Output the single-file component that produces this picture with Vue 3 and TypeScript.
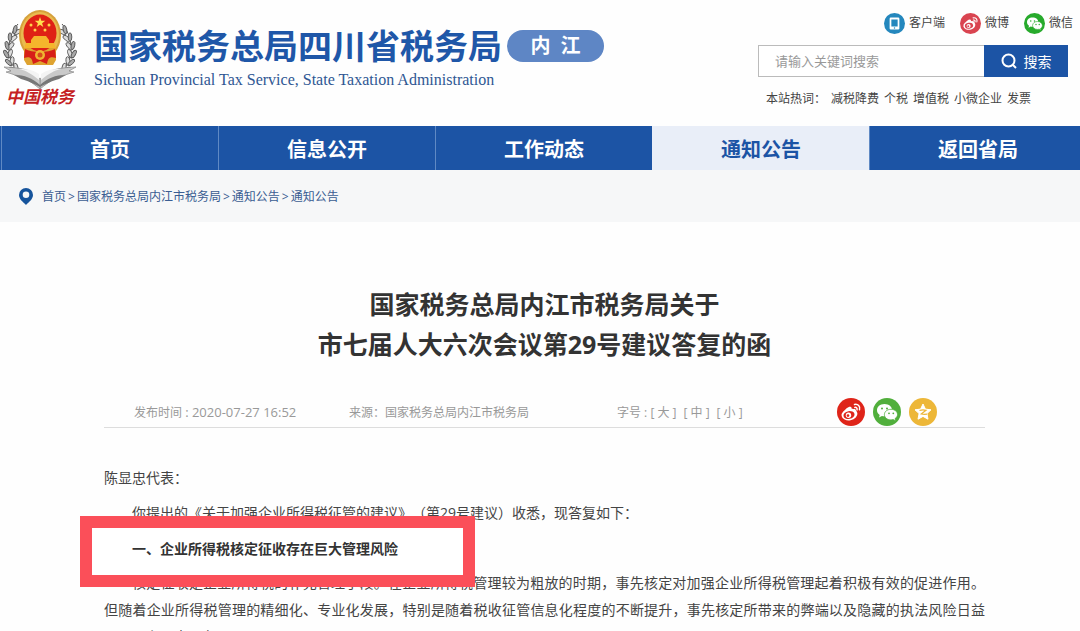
<script setup lang="ts">
import { ref } from 'vue'

const keyword = ref('')
const navItems: string[] = ['首页', '信息公开', '工作动态', '通知公告', '返回省局']
const activeItem = '通知公告'
const hotWords: string[] = ['减税降费', '个税', '增值税', '小微企业', '发票']
const crumbs: string[] = ['首页', '国家税务总局内江市税务局', '通知公告', '通知公告']
const sizes: string[] = ['大', '中', '小']
// Leaf positions of the right-hand wheat ear; the left one is mirrored.
const leaves = [
  { x: 61, y: 20, r: -38 }, { x: 66, y: 27, r: -25 }, { x: 69, y: 35, r: -12 },
  { x: 70, y: 43, r: 5 }, { x: 68, y: 51, r: 22 }, { x: 64, y: 58, r: 40 },
]
</script>

<template>
  <svg class="defs" aria-hidden="true">
    <symbol id="weibo" viewBox="0 0 28 28">
      <ellipse cx="12.5" cy="16.5" rx="8" ry="5.8" fill="#fff" transform="rotate(-10 12.5 16.5)" />
      <path d="M7 14c1-3 5-6 7-5 1 .5.6 2 .4 2.6 2-.8 4.5-.8 4.5 1v2z" fill="#fff" />
      <ellipse cx="12" cy="17" rx="5.6" ry="3.9" fill="currentColor" transform="rotate(-10 12 17)" />
      <circle cx="11.5" cy="17.3" r="2.7" fill="#fff" />
      <circle cx="11" cy="17.6" r="1.3" fill="currentColor" />
      <path d="M17.5 6.5c3.5-.8 6 2 5 5.3M17.8 9.400c1.7-.3 2.700.9 2.200 2.500" fill="none" stroke="#fff" stroke-width="1.5" stroke-linecap="round" />
    </symbol>
    <symbol id="wechat" viewBox="0 0 28 28">
      <path d="M11.5 6C7 6 4 8.8 4 12.2c0 2 1.1 3.6 2.7 4.7L6 19.5l2.9-1.5c.9.3 1.7.3 2.6.3 4.5 0 7.6-2.7 7.6-6.1S16 6 11.5 6z" fill="#fff" />
      <path d="M18 11.3c-3.8 0-6.6 2.3-6.6 5.3s2.8 5.3 6.6 5.3c.8 0 1.5-.1 2.2-.3l2.5 1.3-.6-2.3c1.5-1 2.4-2.4 2.4-4 0-3-2.8-5.3-6.5-5.3z" fill="#fff" stroke="currentColor" stroke-width=".8" />
      <g fill="currentColor"><circle cx="9" cy="10.5" r="1" /><circle cx="14" cy="10.5" r="1" /><circle cx="16" cy="15.3" r=".9" /><circle cx="20.3" cy="15.3" r=".9" /></g>
    </symbol>
  </svg>

  <div class="page">
    <header class="header">
      <a class="brand" href="#">
        <svg class="emblem" viewBox="0 0 76 100" role="img" aria-label="中国税务">
          <g v-for="side in [1, -1]" :key="side" :transform="side === 1 ? undefined : 'translate(76 0) scale(-1 1)'">
            <path d="M60 14c10 11 13 30 2 45" fill="none" stroke="#555" stroke-width="1" />
            <g v-for="leaf in leaves" :key="leaf.y" :transform="`translate(${leaf.x} ${leaf.y}) rotate(${leaf.r})`">
              <ellipse cx="-2" rx="2" ry="4.5" fill="#ddd" stroke="#555" stroke-width=".9" transform="rotate(-28)" />
              <ellipse cx="2" rx="1.8" ry="4.2" fill="#aaa" stroke="#555" stroke-width=".9" transform="rotate(25)" />
            </g>
            <path d="M38 69c7-8 14-11 36-12l-7 4 5 1-9 3c-8 1-15 6-25 14z" fill="#c9c9c9" stroke="#888" stroke-width=".7" />
            <path d="M38 75c8-7 15-10 26-10l-7 4c-7 2-11 4-19 8z" fill="#777" />
            <path d="M39 64c6-4 10-5 20-5-8 2-11 4-20 11z" fill="#f4f4f4" />
          </g>
          <ellipse cx="38" cy="25" rx="21" ry="25" fill="#d6a13b" />
          <ellipse cx="38" cy="25" rx="19" ry="23" fill="#e9bb50" />
          <path d="M22 38h32v12l-3 5H25l-3-5z" fill="#dfa330" />
          <ellipse cx="38" cy="23" rx="16.5" ry="18.5" fill="#df2115" />
          <path d="m38 7 1.3 3.8h4l-3.2 2.400 1.2 3.800-3.3-2.300-3.300 2.300 1.200-3.800-3.200-2.400h4z" fill="#ffdf4f" />
          <g fill="#ffd34a"><circle cx="29" cy="15" r="1.5" /><circle cx="47" cy="15" r="1.5" /><circle cx="33" cy="20" r="1.5" /><circle cx="43" cy="20" r="1.5" /></g>
          <path d="M29 30l3-4h12l3 4v3h5l2 5H22l2-5h5z" fill="#f5b52c" />
          <path d="M23 39c7 4 23 4 30 0l1 9c-7-2-8 1-9 6l-7-3-7 3c-1-5-2-8-9-6z" fill="#d71f18" />
          <circle cx="38" cy="45" r="5" fill="#efb632" /><circle cx="38" cy="45" r="2.5" fill="#d74b1b" />
          <text class="script" x="38" y="93" text-anchor="middle">中国税务</text>
        </svg>
        <span class="names">
          <span class="name-cn">国家税务总局四川省税务局</span>
          <span class="name-en">Sichuan Provincial Tax Service, State Taxation Administration</span>
        </span>
        <span class="city">内&ensp;江</span>
      </a>

      <div class="tools">
        <div class="channels">
          <a href="#"><svg class="channel app" viewBox="0 0 28 28"><circle cx="14" cy="14" r="14" fill="currentColor" /><path d="M9 6h10q1.5 0 1.5 1.5v13Q20.5 22 19 22H9q-1.5 0-1.5-1.5v-13Q7.5 6 9 6zm.8 2.5v9.500h8.400V8.500z" fill="#fff" fill-rule="evenodd" /><circle cx="14" cy="20" r="1" fill="currentColor" /></svg>客户端</a>
          <a href="#"><svg class="channel weibo" viewBox="0 0 28 28"><circle cx="14" cy="14" r="14" fill="currentColor" /><use href="#weibo" /></svg>微博</a>
          <a href="#"><svg class="channel wechat" viewBox="0 0 28 28"><circle cx="14" cy="14" r="14" fill="currentColor" /><use href="#wechat" /></svg>微信</a>
        </div>
        <form class="search" @submit.prevent>
          <input v-model="keyword" type="text" aria-label="搜索关键词" placeholder="请输入关键词搜索">
          <button type="submit">
            <svg viewBox="0 0 16 16" aria-hidden="true"><circle cx="7.5" cy="7.5" r="6" /><path d="m12 12 3 3" /></svg>搜索
          </button>
        </form>
        <div class="hot"><span>本站热词：</span><a v-for="word in hotWords" :key="word" href="#">{{ word }}</a></div>
      </div>
    </header>

    <nav class="nav">
      <a v-for="item in navItems" :key="item" href="#" :class="{ active: item === activeItem }">{{ item }}</a>
    </nav>

    <div class="crumbs">
      <svg viewBox="0 0 14 17" aria-hidden="true"><path d="M7 0a7 7 0 0 0-7 7c0 4 4 7 7 10 3-3 7-6 7-10a7 7 0 0 0-7-7zm0 3.5a3.300 3.300 0 1 1 0 6.600 3.300 3.300 0 0 1 0-6.600z" fill="#16549c" fill-rule="evenodd" /></svg>
      <template v-for="(crumb, i) in crumbs" :key="i"><span v-if="i > 0" class="sep">&gt;</span><a href="#">{{ crumb }}</a></template>
    </div>

    <main class="article">
      <h1>国家税务总局内江市税务局关于<br>市七届人大六次会议第29号建议答复的函</h1>
      <div class="meta">
        <span class="date">发布时间 <time datetime="2020-07-27T16:52">: 2020-07-27 16:52</time></span>
        <span class="source">来源：国家税务总局内江市税务局</span>
        <span class="sizes">字号 : <button v-for="size in sizes" :key="size" type="button">[ {{ size }} ]</button></span>
        <span class="share">
          <a href="#" aria-label="微博"><svg class="s-weibo" viewBox="0 0 28 28"><circle cx="14" cy="14" r="14" fill="currentColor" /><use href="#weibo" /></svg></a>
          <a href="#" aria-label="微信"><svg class="s-wechat" viewBox="0 0 28 28"><circle cx="14" cy="14" r="14" fill="currentColor" /><use href="#wechat" /></svg></a>
          <a href="#" aria-label="QQ空间"><svg class="s-qzone" viewBox="0 0 28 28"><circle cx="14" cy="14" r="14" fill="currentColor" /><path d="m14 6 2.4 5.1 5.6.7-4.100 3.800 1.100 5.600-5-2.800-5 2.800 1.100-5.600L6 11.800l5.600-.7z" fill="#fff" stroke="#fff" stroke-linejoin="round" /><path d="M10.5 12.5c2-.7 4.500-.7 6.500-.2l-4.800 3.700c2 .5 4 .4 5.800.2" fill="none" stroke="currentColor" stroke-width="1.200" /></svg></a>
        </span>
      </div>
      <div class="body">
        <p class="salute">陈显忠代表：</p>
        <p>你提出的《关于加强企业所得税征管的建议》（第29号建议）收悉，现答复如下：</p>
        <div class="marked"><h2>一、企业所得税核定征收存在巨大管理风险</h2></div>
        <p>核定征收是企业所得税的补充管理手段。在企业所得税管理较为粗放的时期，事先核定对加强企业所得税管理起着积极有效的促进作用。但随着企业所得税管理的精细化、专业化发展，特别是随着税收征管信息化程度的不断提升，事先核定所带来的弊端以及隐藏的执法风险日益凸显，主要表现在：</p>
      </div>
    </main>
  </div>
</template>

<style>
body { margin: 0; }
html { overflow: hidden; }
</style>

<style scoped>
.page {
  min-height: 100vh;
  background: #fefefe;
  color: #444;
  font-family: "Open Sans", "Noto Sans CJK SC", sans-serif;
  font-size: 14px;
}
.defs { position: absolute; width: 0; height: 0; }
a { color: inherit; text-decoration: none; }
button { font: inherit; color: inherit; border: 0; background: none; padding: 0; }

.header { display: flex; justify-content: space-between; height: 126px; }
.brand { display: flex; align-items: flex-start; padding: 10px 0 0 2px; }
.emblem { width: 76px; height: 100px; flex: none; }
.script { font: italic bold 17px "Liberation Serif", "Noto Sans CJK SC", serif; fill: #c51f24; }
.names { display: flex; flex-direction: column; margin: 16px 0 0 16px; }
.name-cn { font-size: 34px; line-height: 40px; font-weight: 700; color: #1f57a8; white-space: nowrap; }
.name-en { font: 16px/24px "Liberation Serif", serif; color: #2f5793; white-space: nowrap; margin-top: 2px; }
.city {
  margin: 20px 0 0 5px;
  width: 97px;
  border-radius: 16px;
  background: #5e86c5;
  color: #fff;
  font-size: 20px;
  line-height: 32px;
  font-weight: 700;
  text-align: center;
}

.tools { width: 310px; margin: 12px 12px 0 0; }
.channels { display: flex; justify-content: flex-end; gap: 15px; margin-right: -5px; font-size: 12px; line-height: 22px; }
.channels a { display: flex; align-items: center; gap: 4px; }
.channel { width: 21px; height: 21px; }
.app { color: #2487bd; }
.weibo { color: #d94450; }
.wechat { color: #27aa2c; }
.search { display: flex; height: 32px; margin-top: 11px; }
.search input {
  flex: 1;
  min-width: 0;
  box-sizing: border-box;
  border: 1px solid #bbb;
  border-right: 0;
  padding: 0 16px;
  font: 13px "Open Sans", "Noto Sans CJK SC", sans-serif;
  background: #fff;
}
.search input::placeholder { color: #999; opacity: 1; }
.search button { display: flex; align-items: center; justify-content: center; gap: 7px; width: 84px; background: #1c54a5; color: #fff; }
.search button svg { width: 16px; height: 16px; fill: none; stroke: #fff; stroke-width: 2; }
.hot { display: flex; gap: 5px; margin: 12px 0 0 8px; font-size: 12px; line-height: 20px; white-space: nowrap; }

.nav { display: flex; overflow: hidden; height: 44px; padding-left: 1px; background: #1c54a5; }
.nav a {
  flex: 0 0 217px;
  box-sizing: border-box;
  border-left: 1px solid #5f89c4;
  color: #fff;
  font-size: 20px;
  line-height: 48px;
  font-weight: 700;
  text-align: center;
}
.nav a.active { background: #e9eef8; color: #1c54a5; border-color: #e9eef8; }

.crumbs { display: flex; align-items: center; height: 52px; padding-left: 19px; background: #f6f7f8; color: #3a5d92; font-size: 12px; }
.crumbs svg { width: 14px; height: 17px; margin-right: 9px; }
.sep { margin: 0 2px; }

.article { padding: 62px 95px 0 104px; }
h1 { margin: 0; font-size: 25px; line-height: 40px; font-weight: 700; text-align: center; color: #333; }
.meta { display: flex; align-items: center; box-sizing: border-box; height: 42px; margin-top: 22px; padding: 10px 48px 0 30px; border-bottom: 1px solid #ddd; color: #999; font-size: 12px; white-space: nowrap; }
.date { width: 215px; }
.date time { font-size: 13px; }
.source { width: 268px; }
.sizes { margin-right: auto; }
.sizes button + button { margin-left: 7px; }
.share { display: flex; gap: 8px; }
.share a, .share svg { display: block; width: 28px; height: 28px; }
.s-weibo { color: #df2419; }
.s-wechat { color: #51af3c; }
.s-qzone { color: #edb738; }

.body { margin-top: 36px; text-align: justify; text-spacing-trim: space-all; line-height: 27px; }
.body p { margin: 0; text-indent: 2em; }
.body .salute { text-indent: 0; margin-bottom: 8px; }
.marked {
  position: relative;
  z-index: 1;
  box-sizing: border-box;
  width: 395px;
  height: 71px;
  margin: -10px 0 -18px -24px;
  border: 12px solid #fb4f59;
  background: #fff;
}
.marked h2 { margin: 0; padding: 7px 0 0 40px; font-size: 14px; line-height: 27px; font-weight: 700; color: #333; }
</style>
